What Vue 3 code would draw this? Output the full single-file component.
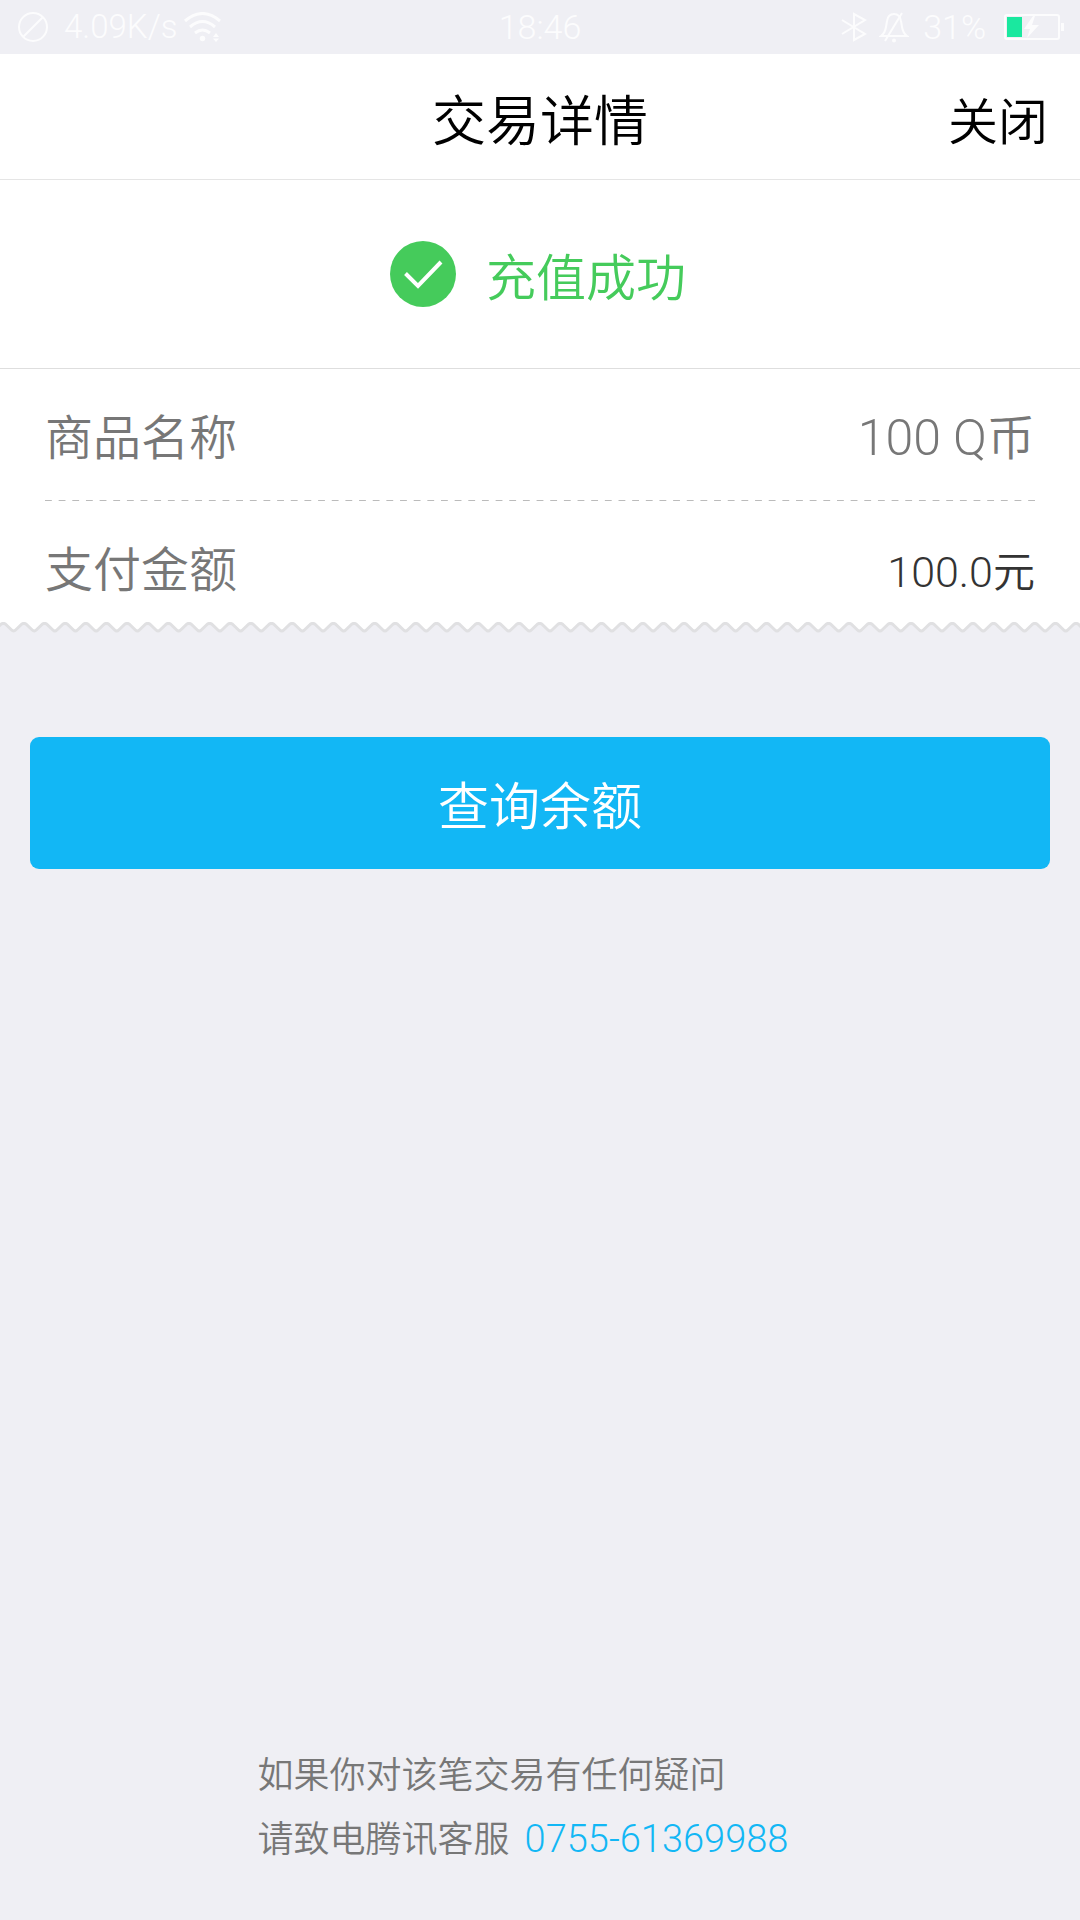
<script setup>
const status = { speed: '4.09K/s', time: '18:46', battery: '31%' }
const phone = '0755-61369988'

// Torn lower edge of the receipt: rounded teeth repeated across the width
const period = 20.63
const teeth = Array.from({ length: 55 }, (_, i) => {
  const x = 3.3 + (i - 1) * period
  return `${i ? 'L' : 'M'}${x - 2} 2 Q${x} 0.8 ${x + 2} 2 L${x + period / 2 - 2} 8 Q${x + period / 2} 10 ${x + period / 2 + 2} 8`
}).join(' ')
const paper = `${teeth} L1100 -4 L-30 -4 Z`
</script>

<template>
  <div class="page">
    <div class="status">
      <div class="side">
        <svg class="blocked" viewBox="0 0 32 32" aria-hidden="true">
          <circle cx="16" cy="16" r="14" />
          <path d="M6 26 L26 6" />
        </svg>
        <span class="speed">{{ status.speed }}</span>
        <svg class="wifi" viewBox="0 0 38 30" aria-hidden="true">
          <path d="M1 9 Q18.500 -6 36 9" />
          <path d="M6 15 Q18.500 4 31 15" />
          <path d="M11 21 Q18.500 15 26 21" />
          <circle cx="18.500" cy="26.500" r="2.700" />
          <path class="solid" d="M29 25 L32 21 L35 25 Z M29 26.500 L32 30 L35 26.500 Z" />
        </svg>
      </div>
      <time>{{ status.time }}</time>
      <div class="side end">
        <svg class="bluetooth" viewBox="0 0 26 30" aria-hidden="true">
          <path d="M1 8 L24 22 L13 28 L13 2 L24 8 L1 22" />
        </svg>
        <svg class="bell" viewBox="0 0 30 32" aria-hidden="true">
          <path d="M2 25 L28 25 Q24 22 23 16 L22 10 Q21 3 15 3 Q9 3 8 10 L7 16 Q6 22 2 25 Z" />
          <path d="M6 30 L23 2" />
          <circle cx="15" cy="29.500" r="2" />
        </svg>
        <span>{{ status.battery }}</span>
        <svg class="battery" viewBox="0 0 60 26" aria-hidden="true">
          <rect x="1" y="1" width="54" height="24" rx="2" />
          <rect class="solid" x="57" y="9" width="3" height="8" />
          <rect class="level" x="3" y="3" width="15" height="20" />
          <path class="solid" d="M29 2 L20 15 L26 15 L23 24 L35 11 L28 11 L31 2 Z" />
        </svg>
      </div>
    </div>

    <header class="bar">
      <h1>交易详情</h1>
      <button class="close" type="button">关闭</button>
    </header>

    <main>
      <section class="result">
        <svg class="tick" viewBox="0 0 66 66" aria-hidden="true">
          <circle cx="33" cy="33" r="33" />
          <path d="M15.500 32.500 L28 45 L51 21" />
        </svg>
        <p>充值成功</p>
      </section>

      <dl class="receipt">
        <div class="row">
          <dt>商品名称</dt>
          <dd class="goods"><span>100 Q</span>币</dd>
        </div>
        <svg class="dashes" aria-hidden="true">
          <line x1="0" y1="50%" x2="100%" y2="50%" pathLength="145" />
        </svg>
        <div class="row">
          <dt>支付金额</dt>
          <dd class="amount"><span>100.0</span>元</dd>
        </div>
      </dl>
      <svg class="torn" viewBox="0 0 1080 12" preserveAspectRatio="none" aria-hidden="true">
        <path class="paper" :d="paper" />
        <path class="edge" :d="teeth" />
      </svg>

      <button class="query" type="button">查询余额</button>
    </main>

    <footer class="help">
      <div>
        <p>如果你对该笔交易有任何疑问</p>
        <p>请致电腾讯客服<a :href="`tel:${phone}`">{{ phone }}</a></p>
      </div>
    </footer>
  </div>
</template>

<style>
body {
  margin: 0;
  background: #efeff4;
}
</style>

<style scoped>
.page {
  display: flex;
  flex-direction: column;
  min-height: 100vh;
  background: #efeff4;
  color: #777;
  font-family: "Noto Sans CJK SC", sans-serif;
  font-weight: 350;
}

h1, p, dl, dd {
  margin: 0;
  font-weight: inherit;
}

button {
  border: 0;
  padding: 0;
  font: inherit;
  cursor: pointer;
}

svg {
  display: block;
  flex: none;
}

.status {
  display: flex;
  align-items: center;
  height: 54px;
  padding: 0 16px;
  color: #fcfcfd;
  font-family: Roboto, sans-serif;
  font-size: 34px;
  line-height: 56px;
}

.speed {
  font-size: 33px;
}

.side {
  display: flex;
  flex: 1;
  align-items: center;
}

.end {
  justify-content: flex-end;
}

.status svg {
  fill: none;
  stroke: #fcfcfd;
  stroke-width: 2;
}

.status .solid {
  fill: #fcfcfd;
  stroke: none;
}

.blocked {
  width: 34px;
  height: 32px;
  margin-right: 14px;
}

.wifi {
  width: 38px;
  height: 30px;
  margin-left: 6px;
}

.status .wifi {
  stroke-width: 3;
}

.status .wifi circle,
.status .bell circle {
  fill: #fcfcfd;
  stroke: none;
}

.bluetooth {
  width: 26px;
  height: 30px;
  margin-right: 12px;
}

.bell {
  width: 30px;
  height: 32px;
  margin-right: 14px;
}

.battery {
  width: 60px;
  height: 26px;
  margin-left: 18px;
}

.status .battery .level {
  fill: #1ae89f;
  stroke: none;
}

.bar {
  box-sizing: border-box;
  display: grid;
  grid-template-columns: 1fr auto 1fr;
  align-items: center;
  height: 126px;
  padding: 2px 32px 0;
  border-bottom: 1px solid #e5e5e5;
  background: #fff;
  color: #000;
}

h1 {
  grid-column: 2;
  font-size: 54px;
  line-height: 80px;
}

.close {
  justify-self: end;
  background: none;
  color: #000;
  font-size: 50px;
  line-height: 80px;
}

.result {
  display: flex;
  align-items: center;
  justify-content: center;
  gap: 30px;
  height: 188px;
  padding-right: 4px;
  border-bottom: 1px solid #dedede;
  background: #fff;
  color: #45cb5b;
  font-size: 50px;
}

.tick {
  width: 66px;
  height: 66px;
}

.tick circle {
  fill: #45cb5b;
}

.tick path {
  fill: none;
  stroke: #fff;
  stroke-width: 4;
}

.receipt {
  padding: 0 45px;
  background: #fff;
}

.row {
  display: flex;
  align-items: baseline;
  justify-content: space-between;
  height: 131px;
  font-size: 48px;
  line-height: 131px;
}

.row:last-child {
  height: 121px;
}

.row span,
.help a {
  font-family: Roboto, sans-serif;
}

.goods span {
  font-size: 50px;
}

.amount {
  color: #333;
  font-size: 42px;
}

.amount span {
  font-size: 43px;
}

.dashes {
  width: 100%;
  height: 1px;
}

.dashes line {
  stroke: #bbb;
  stroke-dasharray: 1 1;
}

.torn {
  width: 100%;
  height: 12px;
}

.paper {
  fill: #fff;
}

.edge {
  fill: none;
  stroke: #e0e0e2;
  stroke-width: 3;
}

.query {
  display: block;
  width: calc(100% - 60px);
  height: 132px;
  margin: 103px 30px 0;
  border-radius: 9px;
  background: #12b7f5;
  color: #fff;
  font-size: 51px;
}

.help {
  display: flex;
  justify-content: center;
  margin-top: auto;
  padding: 0 34px 49px 0;
  font-size: 36px;
  line-height: 64px;
}

.help a {
  margin-left: 15px;
  color: #12b7f5;
  font-size: 38px;
  text-decoration: none;
}
</style>
